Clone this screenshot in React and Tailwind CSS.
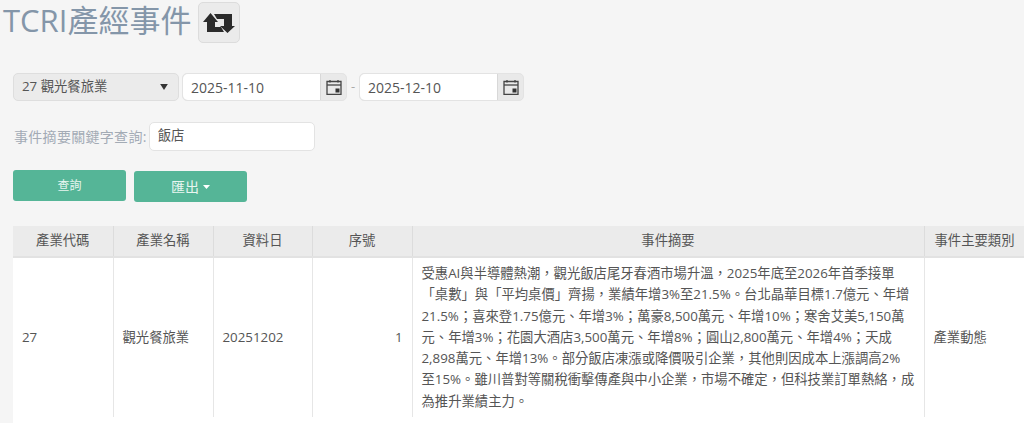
const font = { fontFamily: '"Open Sans", "Noto Sans CJK TC", sans-serif' };
const C = "\uFF0C";
const S = "\uFF1B";
const lines = [
  `受惠AI與半導體熱潮${C}觀光飯店尾牙春酒市場升溫${C}2025年底至2026年首季接單`,
  `「桌數」與「平均桌價」齊揚${C}業績年增3%至21.5%。台北晶華目標1.7億元、年增`,
  `21.5%${S}喜來登1.75億元、年增3%${S}萬豪8,500萬元、年增10%${S}寒舍艾美5,150萬`,
  `元、年增3%${S}花園大酒店3,500萬元、年增8%${S}圓山2,800萬元、年增4%${S}天成`,
  `2,898萬元、年增13%。部分飯店凍漲或降價吸引企業${C}其他則因成本上漲調高2%`,
  `至15%。雖川普對等關稅衝擊傳產與中小企業${C}市場不確定${C}但科技業訂單熱絡${C}成`,
  `為推升業績主力。`,
];

function Cal() {
  return (
    <svg width="16" height="16" viewBox="0 0 16 16" fill="none" className="block">
      <path d="M1 2.5h14v13H1z" stroke="#444" strokeWidth="1.3" />
      <path d="M1 6h14" stroke="#444" strokeWidth="1.3" />
      <path d="M4 1v2.5M12 1v2.5" stroke="#444" strokeWidth="1.3" />
      <rect x="9.5" y="9.5" width="4" height="4" fill="#333" />
    </svg>
  );
}

function DateField({ value }) {
  return (
    <div className="flex h-[28px] w-[165px] rounded-[5px] border border-[#e3e3e3] bg-[#e9e9e9]">
      <div className="flex w-[137px] items-center rounded-l-[5px] bg-white pl-[8px] text-[14px] text-[#555]">{value}</div>
      <div className="flex flex-1 items-center justify-center border-l border-[#d8d8d8]"><Cal /></div>
    </div>
  );
}

const th = "border-r border-[#dcdcdc] font-normal text-center text-[13.33px] text-[#555] bg-[#ebebeb] h-[31px] p-0 border-b-2 border-b-[#e2e2e2]";
const td = "border-r border-[#e6e6e6] text-[13.33px] text-[#555] bg-white align-middle px-[9px] py-0";

export default function App() {
  return (
    <div className="h-[423px] w-[1024px] overflow-hidden bg-[#f5f5f5]" style={font}>
      <div className="flex h-[73px] items-start pl-[3px]">
        <h1 className="mt-[-3px] text-[31px] leading-[46px] font-normal text-[#8496a9]">TCRI產經事件</h1>
        <button className="ml-[7px] mt-[2px] flex h-[41px] w-[42px] items-center justify-center rounded-[5px] border border-[#dcdcdc] bg-[#ebebeb]">
          <svg width="32" height="20" viewBox="0 0 32 20" fill="#2b2b2b">
            <path d="M7.5 0 L15 9 H12 V14 H18 L21 19 H4 V9 H0 Z" />
            <path d="M24.5 20 L17 13 H21 V6 H14 L11 1 H29 V13 H32 Z" />
          </svg>
        </button>
      </div>

      <div className="flex h-[28px] items-center pl-[13px]">
        <div className="relative flex h-[28px] w-[166px] items-center justify-between rounded-[5px] border border-[#dedede] bg-[#ebebeb] pl-[8px] pr-[10px] text-[13.33px] text-[#555]">
          <span>27 觀光餐旅業</span>
          <svg width="8" height="6" viewBox="0 0 9 7" fill="#333"><path d="M0 0h9L4.5 7z" /></svg>
        </div>
        <div className="ml-[3px]"><DateField value="2025-11-10" /></div>
        <span className="mx-[4px] w-[4px] text-[13px] text-[#aaa]">-</span>
        <DateField value="2025-12-10" />
      </div>

      <div className="mt-[21px] flex h-[28px] items-center pl-[14px]">
        <span className="text-[14px] tracking-[0.3px] text-[#a3abb5]">事件摘要關鍵字查詢:</span>
        <div className="ml-[2px] flex h-[29px] w-[166px] items-center rounded-[5px] border border-[#e3e3e3] bg-white pl-[8px] text-[13.33px] text-[#555]">飯店</div>
      </div>

      <div className="mt-[20px] flex h-[32px] items-start gap-[8px] pl-[13px]">
        <button className="h-[31px] w-[113px] rounded-[3px] bg-[#55b597] text-[12px] text-[#e8f5f0]">查詢</button>
        <button className="mt-[1px] flex h-[31px] w-[113px] items-center justify-center gap-[4px] rounded-[3px] bg-[#55b597] text-[14px] text-[#e8f5f0]">
          匯出
          <svg width="7" height="4" viewBox="0 0 7 4" fill="#fff"><path d="M0 0h7L3.5 4z" /></svg>
        </button>
      </div>

      <div className="mt-[24px] ml-[13px] h-[197px] w-[1011px] overflow-hidden bg-white">
        <table className="table-fixed border-collapse" style={{ width: 1100 }}>
          <colgroup>
            <col className="w-[100px]" />
            <col className="w-[100px]" />
            <col className="w-[99px]" />
            <col className="w-[100px]" />
            <col className="w-[512px]" />
            <col className="w-[189px]" />
          </colgroup>
          <thead>
            <tr>
              <th className={th}>產業代碼</th>
              <th className={th}>產業名稱</th>
              <th className={th}>資料日</th>
              <th className={th}>序號</th>
              <th className={th}>事件摘要</th>
              <th className={th + " text-left pl-[10px]"}>事件主要類別</th>
            </tr>
          </thead>
          <tbody>
            <tr className="h-[160px]">
              <td className={td}>27</td>
              <td className={td}>觀光餐旅業</td>
              <td className={td}>20251202</td>
              <td className={td + " text-right"}>1</td>
              <td className={td + " leading-[21.3px] whitespace-nowrap"}>
                {lines.map((l) => <div key={l}>{l}</div>)}
              </td>
              <td className={td}>產業動態</td>
            </tr>
          </tbody>
        </table>
      </div>
    </div>
  );
}
